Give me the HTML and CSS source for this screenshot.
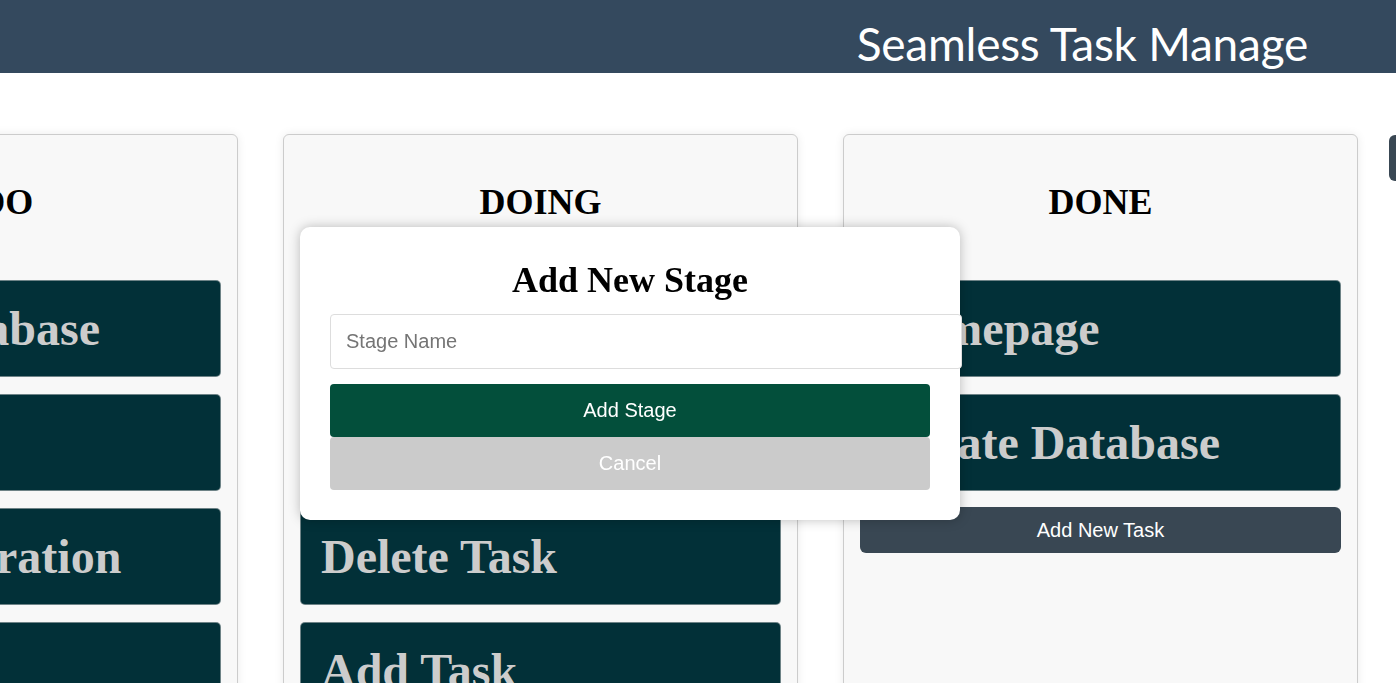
FILE: index.html
```html
<!DOCTYPE html>
<html lang="en">
<head>
<meta charset="utf-8">
<title>Seamless Task Manager</title>
<link rel="stylesheet" href="styles.css">
</head>
<body>
<header class="topbar">
  <h1 class="title">Seamless Task Manage</h1>
</header>
<main class="board">
  <section class="stage">
    <h2 class="stage-title">TODO</h2>
    <div class="tasks">
      <div class="task">Create Database</div>
      <div class="task">Testing</div>
      <div class="task">User Registration</div>
      <div class="task">Deploy</div>
    </div>
  </section>
  <section class="stage">
    <h2 class="stage-title">DOING</h2>
    <div class="tasks">
      <div class="task">Edit Task</div>
      <div class="task">Move Task</div>
      <div class="task">Delete Task</div>
      <div class="task">Add Task</div>
    </div>
  </section>
  <section class="stage">
    <h2 class="stage-title">DONE</h2>
    <div class="tasks">
      <div class="task">Homepage</div>
      <div class="task">Create Database</div>
      <button class="add-task">Add New Task</button>
    </div>
  </section>
  <button class="add-stage">Add Stage</button>
</main>
<div class="modal">
  <h2 class="modal-title">Add New Stage</h2>
  <input class="modal-input" type="text" placeholder="Stage Name">
  <button class="btn btn-primary">Add Stage</button>
  <button class="btn btn-cancel">Cancel</button>
</div>
</body>
</html>
```
FILE: styles.css
```css
html, body {
  margin: 0;
  padding: 0;
  overflow: hidden;
  background: #ffffff;
  font-family: "Liberation Serif", "Times New Roman", serif;
}

.topbar {
  height: 73px;
  box-sizing: border-box;
  background: #34495e;
  display: flex;
  align-items: flex-start;
  justify-content: flex-end;
  padding-top: 21px;
  padding-right: 88px;
}

.title {
  margin: 0;
  color: #ffffff;
  font-family: Lato, "Noto Sans", sans-serif;
  font-weight: 400;
  font-size: 46px;
  line-height: 1;
  letter-spacing: -0.25px;
  white-space: nowrap;
}

.board {
  display: flex;
  align-items: stretch;
  padding-top: 61px;
  margin-left: -299.5px;
}

.stage {
  flex: 0 0 515px;
  box-sizing: border-box;
  min-height: 640px;
  margin: 0 22.5px;
  padding: 0 16px 16px;
  background: #f8f8f8;
  border: 1px solid #cccccc;
  border-radius: 6px;
  box-shadow: 0 0 10px rgba(0, 0, 0, 0.08);
}

.stage-title {
  margin: 30px 0 30px;
  padding-top: 16px;
  text-align: center;
  font-size: 36px;
  font-weight: 700;
  color: #000000;
}

.tasks {
  padding-top: 27px;
  display: flex;
  flex-direction: column;
}

.task {
  background: #023038;
  color: #cccccc;
  border: 1px solid rgba(200, 200, 200, 0.55);
  border-radius: 5px;
  padding: 20px;
  margin-bottom: 17px;
  font-size: 48px;
  font-weight: 700;
  white-space: nowrap;
  overflow: hidden;
}

.add-task {
  margin-top: -1px;
  height: 46px;
  border: none;
  border-radius: 6px;
  background: #394753;
  color: #ffffff;
  font-family: "Liberation Sans", Arial, sans-serif;
  font-size: 20px;
}

.add-stage {
  align-self: flex-start;
  flex: 0 0 auto;
  margin-left: 8.5px;
  margin-top: 1px;
  height: 46px;
  padding: 0 20px;
  border: none;
  border-radius: 6px;
  background: #394753;
  color: #ffffff;
  font-family: "Liberation Sans", Arial, sans-serif;
  font-size: 20px;
  white-space: nowrap;
}

.modal {
  position: fixed;
  left: 300px;
  top: 227px;
  width: 660px;
  box-sizing: border-box;
  padding: 30px;
  background: #ffffff;
  border-radius: 10px;
  box-shadow: 0 0 12px rgba(0, 0, 0, 0.25);
}

.modal-title {
  margin: 3px 0 13px;
  text-align: center;
  font-size: 36px;
  font-weight: 700;
  color: #000000;
  line-height: 41px;
}

.modal-input {
  display: block;
  width: 100%;
  padding: 15px;
  border: 1px solid #dddddd;
  border-radius: 4px;
  font-family: "Liberation Sans", Arial, sans-serif;
  font-size: 20px;
  line-height: 23px;
  height: 23px;
  outline: none;
  background: #ffffff;
}

.modal-input::placeholder {
  color: #757575;
}

.btn {
  display: block;
  width: 100%;
  padding: 15px;
  border: none;
  border-radius: 4px;
  color: #ffffff;
  font-family: "Liberation Sans", Arial, sans-serif;
  font-size: 20px;
  line-height: 23px;
}

.btn-primary {
  margin-top: 15px;
  background: #034f3b;
}

.btn-cancel {
  background: #cbcbcb;
}
```
